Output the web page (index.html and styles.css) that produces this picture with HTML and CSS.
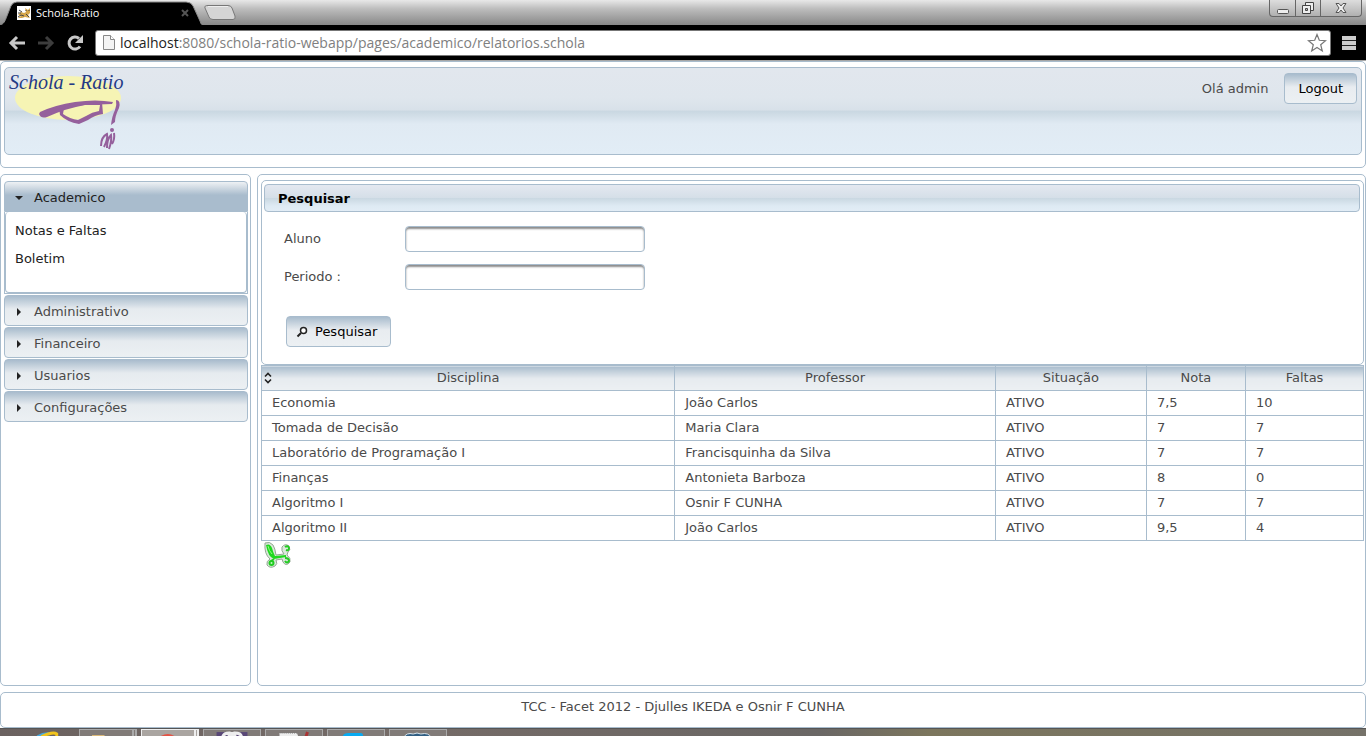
FILE: index.html
```html
<!DOCTYPE html>
<html lang="pt-BR">
<head>
<meta charset="utf-8">
<title>Schola-Ratio</title>
<link rel="stylesheet" href="styles.css">
</head>
<body>
<header class="browser">
  <div class="tabstrip">
    <div class="tab">
      <svg class="tab-shape" viewBox="0 0 204 24" preserveAspectRatio="none" aria-hidden="true"><path d="M0 24C4 23 5 20 7 15L11 5Q13 1 17 1H187Q192 1 194 5L201 20Q202 24 204 24Z" fill="#000"/><path d="M0 24C4 23 5 20 7 15L11 5Q13 1 17 1H187Q192 1 194 5L201 20Q202 24 204 24" fill="none" stroke="#8b8b8b"/></svg>
      <svg class="favicon" viewBox="0 0 14 14" aria-hidden="true"><path fill="#fff" d="M0 0h14v14H0z"/><path d="M1 9L4 6 7 7 9 6 8 2 11 4 13 2 13 7 11 9 13 12 8 11 5 12 1 12 4 10Z" fill="#d5a64b"/><path d="M2 4L5 6M1 7H4M1 11L4 9 7 10M9 8L12 11M9 4v1M12 4v1" stroke="#474747" fill="none"/></svg>
      <span class="tab-title">Schola-Ratio</span>
      <button class="tab-close" aria-label="Fechar guia"><svg viewBox="0 0 8 8"><path d="M1 1l6 6M7 1L1 7" stroke="#555" stroke-width="2"/></svg></button>
    </div>
    <button class="new-tab" aria-label="Nova guia"><svg viewBox="0 0 34 17"><path d="M5 1.500H25Q28 1.500 29 4L32 12Q33 15.500 30 15.500H10Q7 15.500 6 13L2 4Q1 1.500 5 1.500Z" fill="#d5d5d5" stroke="#777"/><path d="M5 2.500H25" stroke="#eee"/></svg></button>
    <div class="window-buttons">
      <button aria-label="Minimizar"><svg viewBox="0 0 14 14"><rect x="1.500" y="8.500" width="11" height="4" rx="1" fill="#eee" stroke="#555"/></svg></button>
      <button aria-label="Restaurar"><svg viewBox="0 0 14 14"><path d="M4.500 1.500h8v8h-8z" fill="#eee" stroke="#444"/><path d="M1.500 4.500h8v8h-8z" fill="#eee" stroke="#444"/><path d="M4.500 7.500h2v2h-2z" fill="#bbb" stroke="#444"/></svg></button>
      <button aria-label="Fechar"><svg viewBox="0 0 14 14"><path d="M2 2.500h3L7 5l2-2.500h3L9 7l3 4.500H9L7 9l-2 2.500H2L5 7Z" fill="#eee" stroke="#555"/></svg></button>
    </div>
  </div>
  <div class="toolbar">
    <button aria-label="Voltar"><svg viewBox="0 0 18 18"><path d="M9 3L3 9l6 6M3 9h14" fill="none" stroke="#c8c8c8" stroke-width="3"/></svg></button>
    <button aria-label="Avançar"><svg viewBox="0 0 18 18"><path d="M9 3l6 6-6 6M15 9H1" fill="none" stroke="#3d3d3d" stroke-width="3"/></svg></button>
    <button aria-label="Recarregar"><svg viewBox="0 0 18 18"><path d="M14 12.500A6 6 0 1 1 13 4.500" fill="none" stroke="#c8c8c8" stroke-width="3"/><path d="M17 1v8H9Z" fill="#c8c8c8"/></svg></button>
    <div class="address">
      <svg class="page-icon" viewBox="0 0 12 15" aria-hidden="true"><path d="M.5.5h7l4 4v10H.5Z" fill="#f4f4f4" stroke="#888"/><path d="M7.500.5v4h4" fill="#fff" stroke="#888"/></svg>
      <label for="url">localhost</label>
      <input id="url" type="text" value=":8080/schola-ratio-webapp/pages/academico/relatorios.schola">
      <button class="star" aria-label="Favoritos"><svg viewBox="0 0 20 20"><path d="M10 1.500l2.300 5.800 6.200.4-4.800 4 1.600 6.300L10 14.500 4.700 18l1.600-6.300-4.800-4 6.200-.4Z" fill="#fff" stroke="#777" stroke-width="1.200"/></svg></button>
    </div>
    <button class="menu-button" aria-label="Menu"><svg viewBox="0 0 14 14"><path d="M0 2h14M0 7h14M0 12h14" stroke="#ccc" stroke-width="4"/><path d="M0 4.500h14M0 9.500h14" stroke="#222"/></svg></button>
  </div>
</header>

<div class="page">
  <header class="frame top">
    <div class="banner">
      <svg class="logo" viewBox="0 0 124 86" role="img" aria-label="Schola - Ratio">
        <ellipse cx="63" cy="30" rx="53" ry="22" fill="#f6f4b4"/>
        <text class="logo-text" x="4" y="21">Schola - Ratio</text>
        <g fill="#95609c">
          <path d="M35 44Q50 37 70 34Q91 31 108 34L107 36L80 37Q62 40 42 49Q36 51 34 46Z"/>
          <path fill-rule="evenodd" d="M54 39L97 34l1 12q-8 1-15 6l-9 4q-12-2-19-9ZM59 40l-1 6q7 5 15 6l8-4q6-4 13-5l1-6-16 0Z"/>
          <path d="M111 32q5 0 3 8-4 8-4 14l-4 3q1-9 4-15 2-5 1-10Z"/>
          <circle cx="107" cy="62" r="2"/>
        </g>
        <path d="M96 78q0-9 6-12 1 5-3 13M102 80q0-9 4-13 1 6-2 14M107 76q3-5 2-11" fill="none" stroke="#95609c" stroke-width="2"/>
      </svg>
      <div class="session"><span>Olá admin</span><button class="button">Logout</button></div>
    </div>
  </header>

  <div class="columns">
    <nav class="frame side">
      <section>
        <button class="acc-head open" aria-expanded="true"><svg viewBox="0 0 8 8"><path d="M0 2h8L4 6Z"/></svg>Academico</button>
        <div class="acc-body"><div class="acc-inner"><a href="#notas">Notas e Faltas</a><a href="#boletim">Boletim</a></div></div>
      </section>
      <button class="acc-head" aria-expanded="false"><svg viewBox="0 0 8 8"><path d="M2 0v8L6 4Z"/></svg>Administrativo</button>
      <button class="acc-head" aria-expanded="false"><svg viewBox="0 0 8 8"><path d="M2 0v8L6 4Z"/></svg>Financeiro</button>
      <button class="acc-head" aria-expanded="false"><svg viewBox="0 0 8 8"><path d="M2 0v8L6 4Z"/></svg>Usuarios</button>
      <button class="acc-head" aria-expanded="false"><svg viewBox="0 0 8 8"><path d="M2 0v8L6 4Z"/></svg>Configurações</button>
    </nav>

    <main class="frame content">
      <form class="panel">
        <h1 class="panel-title">Pesquisar</h1>
        <div class="fields">
          <label for="aluno">Aluno</label><input id="aluno" type="text">
          <label for="periodo">Periodo :</label><input id="periodo" type="text">
        </div>
        <button class="button search" type="button"><svg viewBox="0 0 12 12"><circle cx="7.500" cy="4.500" r="3" fill="#fff" stroke="#222" stroke-width="1.500"/><path d="M5 7L1.500 10.500" stroke="#222" stroke-width="2"/></svg>Pesquisar</button>
      </form>
      <table class="grades">
        <colgroup><col class="c-disc"><col class="c-prof"><col class="c-sit"><col class="c-nota"><col class="c-falta"></colgroup>
        <thead><tr>
          <th><div class="sortable"><button class="sort" aria-label="Ordenar"><svg viewBox="0 0 8 12"><path d="M1 4.500l3-3 3 3M1 7.500l3 3 3-3" fill="none" stroke="#222" stroke-width="1.600"/></svg></button><span>Disciplina</span></div></th>
          <th>Professor</th><th>Situação</th><th>Nota</th><th>Faltas</th>
        </tr></thead>
        <tbody>
          <tr><td>Economia</td><td>João Carlos</td><td>ATIVO</td><td>7,5</td><td>10</td></tr>
          <tr><td>Tomada de Decisão</td><td>Maria Clara</td><td>ATIVO</td><td>7</td><td>7</td></tr>
          <tr><td>Laboratório de Programação I</td><td>Francisquinha da Silva</td><td>ATIVO</td><td>7</td><td>7</td></tr>
          <tr><td>Finanças</td><td>Antonieta Barboza</td><td>ATIVO</td><td>8</td><td>0</td></tr>
          <tr><td>Algoritmo I</td><td>Osnir F CUNHA</td><td>ATIVO</td><td>7</td><td>7</td></tr>
          <tr><td>Algoritmo II</td><td>João Carlos</td><td>ATIVO</td><td>9,5</td><td>4</td></tr>
        </tbody>
      </table>
      <a class="export" href="#exportar" aria-label="Exportar para Excel"><svg viewBox="0 0 28 28"><path d="M2 2q5-2 8 2 2 3 3 10l8-1q-3-3-2-7 3-4 7-1 2 4-1 6l-1 3q4 3 3 7-4 5-7 0l-1-3-6 1q2 4-1 6-5 3-8-1-1-4 3-6Q1 13 2 2Z" fill="#dbe8db" stroke="#93a893"/><path d="M3 4q4-2 6 3 1 4 3 8l11-1v2l-12 2q-6-2-8-14Z" fill="#20d820"/><path d="M22 6q3-2 4 1 0 3-3 2M22 17q4 0 4 3-2 3-4 0M11 18l-3 2" fill="none" stroke="#22cc22" stroke-width="2"/><circle cx="8.500" cy="22" r="3" fill="#20cc20"/><circle cx="8.500" cy="22" r="1" fill="#bff5bf"/><path d="M5 5q1 5 4 8" fill="none" stroke="#8dfa80"/></svg></a>
    </main>
  </div>

  <footer class="frame foot">TCC - Facet 2012 - Djulles IKEDA e Osnir F CUNHA</footer>
</div>

<div class="taskbar" aria-hidden="true">
  <div class="task start"><svg viewBox="0 0 78 8"><path d="M39 8Q46 4 52 5" stroke="#45aae0" stroke-width="3" fill="none"/><path d="M43 8Q55 2 59 5v3" stroke="#f2c41c" stroke-width="3" fill="none"/></svg></div>
  <div class="task stacked"><svg viewBox="0 0 50 8"><path d="M11 8V5h12l2 2v1Z" fill="#dbb878"/></svg></div>
  <div class="task stacked active"><svg viewBox="0 0 50 8"><path d="M15 8Q25 0 34 8Z" fill="#e35345"/></svg></div>
  <div class="task"><svg viewBox="0 0 58 8"><path d="M13 2h32v6H13Z" fill="#594777"/><path d="M19 8q1-5 7-5v5M29 2v6M32 8V3q7 0 7 5" fill="none" stroke="#eee" stroke-width="3"/></svg></div>
  <div class="task"><svg viewBox="0 0 58 8"><path d="M14 3h18l2 5H14Z" fill="#eee"/><path d="M15 3h17" stroke="#777" stroke-dasharray="1 1"/><path d="M43 2l-2 6" stroke="#a33" stroke-width="3"/></svg></div>
  <div class="task"><svg viewBox="0 0 58 8"><path d="M15 8q0-6 9-5h10q3 0 2 5Z" fill="#08aaf1"/></svg></div>
  <div class="task"><svg viewBox="0 0 58 8"><path d="M14 8q3-6 10-4 4-2 8 0 8-2 11 4" fill="#315e82" stroke="#dce7ee"/></svg></div>
</div>
</body>
</html>
```
FILE: styles.css
```css
* { box-sizing: border-box; }
body {
  margin: 0;
  min-height: 100vh;
  display: flex;
  flex-direction: column;
  background: #fff;
  color: #4a4a4a;
  font: 13px/16px Verdana, "DejaVu Sans", sans-serif;
}
button { font: inherit; color: inherit; cursor: pointer; }
svg { display: block; }

/* Browser window */
.browser { border-bottom: 1px solid #a6a6a6; }
.tabstrip {
  height: 25px;
  display: flex;
  align-items: flex-end;
  background: linear-gradient(#e8e8e8, #bdbdbd 35%, #888);
}
.browser button { border: 0; padding: 0; background: none; }
.tab {
  position: relative;
  width: 203px;
  height: 24px;
  padding: 0 14px 0 17px;
  display: flex;
  align-items: center;
  gap: 5px;
  color: #fff;
  font: 11px/16px "Open Sans", sans-serif;
}
.tab-shape { position: absolute; inset: 0; width: 100%; height: 100%; }
.favicon { position: relative; width: 14px; height: 14px; }
.tab-title { position: relative; flex: 1; }
.tab-close { position: relative; }
.tab-close svg { width: 8px; height: 8px; }
.new-tab { align-self: center; }
.new-tab svg { width: 34px; height: 17px; }
.window-buttons {
  align-self: flex-start;
  margin: 0 4px 0 auto;
  display: flex;
  border: 1px solid #666;
  border-top: 0;
  border-radius: 0 0 4px 4px;
  background: linear-gradient(#ddd, #b0b0b0);
}
.window-buttons button {
  width: 25px;
  height: 16px;
  display: flex;
  justify-content: center;
  align-items: center;
}
.window-buttons button + button { border-left: 1px solid #666; }
.window-buttons button:last-child { width: 41px; }
.window-buttons svg { width: 14px; height: 14px; }
.toolbar {
  height: 35px;
  padding: 0 10px 0 8px;
  display: flex;
  align-items: center;
  gap: 11px;
  background: #000;
}
.toolbar button svg { width: 18px; height: 18px; }
.toolbar .menu-button svg { width: 14px; height: 14px; }
.address {
  flex: 1;
  height: 26px;
  padding: 0 3px 0 7px;
  display: flex;
  align-items: center;
  border: 1px solid #777;
  border-radius: 3px;
  background: #fff;
  color: #222;
  font: 14px/20px "Open Sans", sans-serif;
}
.page-icon { width: 12px; height: 15px; margin-right: 5px; }
.address input {
  flex: 1;
  min-width: 0;
  padding: 0;
  border: 0;
  outline: 0;
  background: none;
  color: #808080;
  font: inherit;
}
.address .star svg { width: 20px; height: 20px; }

/* Page layout */
.page { flex: 1; display: flex; flex-direction: column; gap: 6px; }
.frame { border: 1px solid #a8bccd; border-radius: 5px; }
.top { padding: 5px 3px 12px; }
.banner {
  display: flex;
  justify-content: space-between;
  border: 1px solid #a8bccd;
  border-radius: 5px;
  background: linear-gradient(#e2e7ee, #dfe6ed 35%, #d8e1e9 49%, #c9d7e1 50%, #e0eaf3 65%, #e2edf6);
}
.logo { width: 124px; height: 86px; }
.logo-text {
  fill: #243a85;
  font: italic 20px "Monotype Corsiva", "Liberation Serif", serif;
}
.session { padding: 5px 4px; display: flex; align-items: center; align-self: flex-start; gap: 16px; }
.button {
  height: 31px;
  padding: 0 13px;
  border: 1px solid #a8bccd;
  border-radius: 4px;
  background: linear-gradient(#a9bccd, #e8ecf0 45%, #ecf0f3);
}
.session .button, .search { color: #000; }
.columns { flex: 1; display: flex; gap: 6px; }

/* Accordion menu */
.side { width: 251px; padding: 6px 2px 6px 3px; display: flex; flex-direction: column; gap: 1px; }
.acc-head {
  width: 100%;
  height: 31px;
  padding: 2px 10px 0;
  display: flex;
  align-items: center;
  gap: 11px;
  border: 1px solid #a8bccd;
  border-radius: 4px;
  background: linear-gradient(#a9bccd, #e6ebef 45%, #ecf0f3);
}
.acc-head svg { width: 8px; height: 8px; fill: #222; }
.acc-head.open {
  border-radius: 4px 4px 0 0;
  background: linear-gradient(#eef1f4, #a9bccd 45%);
  color: #222;
}
.acc-body { border: 1px solid #a8bccd; border-top: 0; }
.acc-inner {
  min-height: 81px;
  padding: 11px 9px;
  display: flex;
  flex-direction: column;
  gap: 12px;
  border: 1px solid #a8bccd;
  border-top: 0;
  border-radius: 4px;
}
.acc-inner a { color: #222; text-decoration: none; }

/* Search and results */
.content { flex: 1; min-width: 0; padding: 5px 1px 5px 3px; }
.panel { padding: 3px 3px 17px 2px; border: 1px solid #a8bccd; border-radius: 5px; }
.panel-title {
  margin: 0 0 14px;
  padding: 6px 13px 4px;
  border: 1px solid #a8bccd;
  border-radius: 4px;
  background: linear-gradient(#e4e8f0, #d5dfe8 49%, #c9d7e1 50%, #deeaf3 80%, #e2edf6);
  color: #000;
  font-size: 13px;
  line-height: 16px;
}
.fields {
  padding-left: 20px;
  display: grid;
  grid-template-columns: 121px 240px;
  row-gap: 12px;
  align-items: center;
}
.fields input {
  height: 26px;
  padding: 0 5px;
  border: 1px solid #a8bccd;
  border-radius: 4px;
  outline: 0;
  box-shadow: inset 0 2px 2px #8c8c8c;
  font: inherit;
}
.search {
  margin: 26px 0 0 22px;
  padding: 0 13px 0 9px;
  display: flex;
  align-items: center;
  gap: 7px;
}
.search svg { width: 12px; height: 12px; }
.grades { width: 100%; border-collapse: collapse; table-layout: fixed; }
.c-disc { width: 37.5%; }
.c-prof { width: 29.1%; }
.c-sit { width: 13.7%; }
.c-nota { width: 9%; }
.c-falta { width: 10.7%; }
.grades th, .grades td { height: 25px; padding: 4px 10px; border: 1px solid #a8bccd; text-align: left; font-weight: normal; }
.grades th { padding: 4px 2px; text-align: center; background: linear-gradient(#a9bccd, #e6ebef 50%, #ecf0f3); }
.sortable { display: flex; align-items: center; }
.sortable span { flex: 1; padding-right: 8px; }
.sort { padding: 0; border: 0; background: none; }
.sort svg { width: 8px; height: 12px; }
.export { display: inline-block; margin-left: 2px; }
.export svg { width: 28px; height: 28px; }
.foot { height: 36px; padding-top: 6px; text-align: center; }

/* Desktop taskbar */
.taskbar {
  height: 8px;
  display: flex;
  gap: 4px;
  overflow: hidden;
  background: linear-gradient(90deg, #6b6260, #756b67 30%, #6a6765 60%, #7c765d 68%, #757269);
  border-top: 1px solid #555;
}
.task { width: 58px; border: 1px solid #aaa; border-bottom: 0; background: #817b78; }
.task svg { width: 100%; height: 8px; }
.task.start { width: 75px; border: 0; background: none; }
.task.stacked { border-right: 5px double #aaa; }
.task.active { border-color: #eee; background: #aaa5a1; }
```
